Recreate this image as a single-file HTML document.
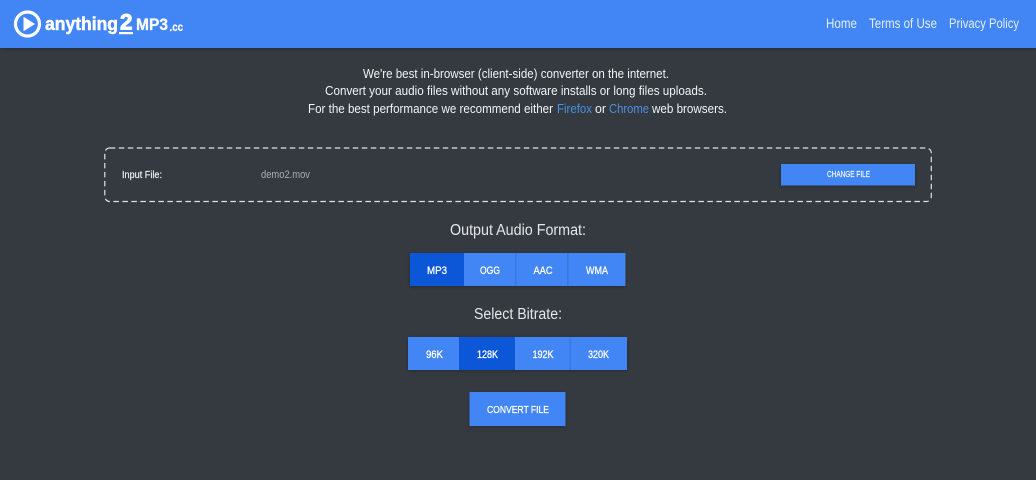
<!DOCTYPE html>
<html lang="en">
<head>
<meta charset="utf-8">
<title>anything2MP3.cc</title>
<style>
html,body{margin:0;padding:0;width:1036px;height:480px;overflow:hidden;background:#343a40}
svg{display:block}
text{font-family:"Liberation Sans",Arial,sans-serif}
.p{font-size:13px;fill:#f1f3f4}
.l{font-size:13px;fill:#4a8fe3}
.n{font-size:13.500px;fill:#e3eeff}
.h{font-size:15.500px;fill:#e4e6e8}
.b{font-size:11px;fill:#fff;stroke:#fff;stroke-width:.3px}
.t{font-weight:bold;fill:#fff;stroke:#fff}
</style>
</head>
<body>
<svg width="1036" height="480" viewBox="0 0 1036 480" xmlns="http://www.w3.org/2000/svg">
<defs>
<filter id="s" x="-10%" y="-20%" width="120%" height="150%"><feDropShadow dx="0" dy="1" stdDeviation="1.800" flood-color="#000" flood-opacity=".25"/></filter>
</defs>
<rect width="1036" height="480" fill="#343a40"/>
<rect width="1036" height="48" fill="#4285f4" filter="url(#s)"/>

<!-- logo -->
<circle cx="27.500" cy="24" r="12" fill="none" stroke="#fff" stroke-width="3.200"/>
<path d="M23.500 16.800 L35 24 L23.500 31.200 Z" fill="#fff"/>
<text class="t" x="45" y="30" font-size="18" stroke-width=".5" textLength="73" lengthAdjust="spacingAndGlyphs">anything</text>
<text class="t" x="120" y="29.500" font-size="22" stroke-width=".9" textLength="12.500" lengthAdjust="spacingAndGlyphs">2</text>
<rect x="119" y="32" width="14" height="2.200" fill="#fff"/>
<text class="t" x="136" y="30" font-size="17" stroke-width=".3" textLength="32" lengthAdjust="spacingAndGlyphs">MP3</text>
<text class="t" x="169.500" y="31" font-size="12" stroke-width=".2" textLength="13.500" lengthAdjust="spacingAndGlyphs">.cc</text>

<!-- nav -->
<text class="n" x="826" y="28" textLength="31" lengthAdjust="spacingAndGlyphs">Home</text>
<text class="n" x="869" y="28" textLength="68" lengthAdjust="spacingAndGlyphs">Terms of Use</text>
<text class="n" x="949" y="28" textLength="70" lengthAdjust="spacingAndGlyphs">Privacy Policy</text>

<!-- intro -->
<text class="p" x="363" y="78" textLength="306" lengthAdjust="spacingAndGlyphs">We're best in-browser (client-side) converter on the internet.</text>
<text class="p" x="325" y="95" textLength="382" lengthAdjust="spacingAndGlyphs">Convert your audio files without any software installs or long files uploads.</text>
<text class="p" x="308" y="113" textLength="245" lengthAdjust="spacingAndGlyphs">For the best performance we recommend either</text>
<text class="l" x="557" y="113" textLength="35" lengthAdjust="spacingAndGlyphs">Firefox</text>
<text class="p" x="595" y="113" textLength="11" lengthAdjust="spacingAndGlyphs">or</text>
<text class="l" x="609" y="113" textLength="40" lengthAdjust="spacingAndGlyphs">Chrome</text>
<text class="p" x="652" y="113" textLength="75" lengthAdjust="spacingAndGlyphs">web browsers.</text>

<!-- input box -->
<rect x="104.800" y="148" width="826.500" height="53.500" rx="5" fill="none" stroke="#dfe2e5" stroke-width="1.200" stroke-dasharray="5.500 3.500"/>
<text x="122" y="178" font-size="10.500" fill="#f5f7f8" stroke="#f5f7f8" stroke-width=".15" textLength="40" lengthAdjust="spacingAndGlyphs">Input File:</text>
<text x="261" y="178" font-size="11" fill="#a9adb0" textLength="49" lengthAdjust="spacingAndGlyphs">demo2.mov</text>
<rect x="781" y="164" width="134" height="21.500" fill="#4285f4" filter="url(#s)"/>
<text x="827" y="177" font-size="8" fill="#fff" stroke="#fff" stroke-width=".15" textLength="43" lengthAdjust="spacingAndGlyphs">CHANGE FILE</text>

<!-- format -->
<text class="h" x="450" y="235" textLength="136" lengthAdjust="spacingAndGlyphs">Output Audio Format:</text>
<rect x="410" y="253" width="215.500" height="33" fill="#4285f4" filter="url(#s)"/>
<rect x="410" y="253" width="54" height="33" fill="#0b57d8"/>
<rect x="515" y="253" width="1.500" height="33" fill="#3b78de"/>
<rect x="567" y="253" width="1.500" height="33" fill="#3b78de"/>
<text class="b" x="427" y="274" textLength="20" lengthAdjust="spacingAndGlyphs">MP3</text>
<text class="b" x="480" y="274" textLength="20" lengthAdjust="spacingAndGlyphs">OGG</text>
<text class="b" x="533.500" y="274" textLength="19" lengthAdjust="spacingAndGlyphs">AAC</text>
<text class="b" x="586" y="274" textLength="22" lengthAdjust="spacingAndGlyphs">WMA</text>

<!-- bitrate -->
<text class="h" x="474" y="319" textLength="88" lengthAdjust="spacingAndGlyphs">Select Bitrate:</text>
<rect x="408" y="337" width="219" height="33" fill="#4285f4" filter="url(#s)"/>
<rect x="459" y="337" width="56" height="33" fill="#0b57d8"/>
<rect x="569.500" y="337" width="1.500" height="33" fill="#3b78de"/>
<text class="b" x="426" y="358" textLength="17" lengthAdjust="spacingAndGlyphs">96K</text>
<text class="b" x="477" y="358" textLength="21" lengthAdjust="spacingAndGlyphs">128K</text>
<text class="b" x="532.500" y="358" textLength="21" lengthAdjust="spacingAndGlyphs">192K</text>
<text class="b" x="588" y="358" textLength="21" lengthAdjust="spacingAndGlyphs">320K</text>

<!-- convert -->
<rect x="469.500" y="392" width="96" height="34" fill="#4285f4" filter="url(#s)"/>
<text class="b" x="487" y="413" style="font-size:10.500px" textLength="62" lengthAdjust="spacingAndGlyphs">CONVERT FILE</text>
</svg>
</body>
</html>
